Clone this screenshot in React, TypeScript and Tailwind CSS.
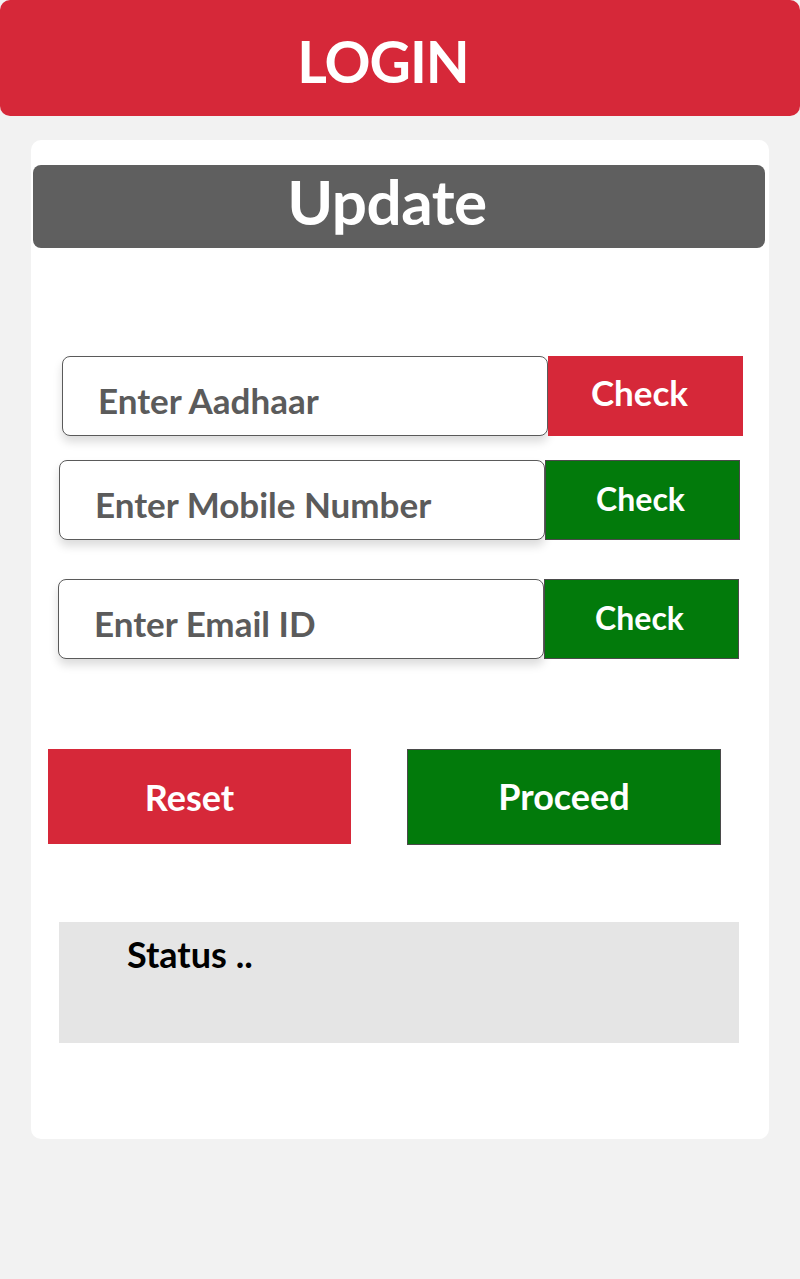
import React from "react";

const font = { fontFamily: "Lato, 'Open Sans', sans-serif" };

type RowProps = {
  placeholder: string;
  offset: string;
  top: string;
  danger?: boolean;
};

const CheckRow: React.FC<RowProps> = ({ placeholder, offset, top, danger }) => (
  <div className={`flex ${offset} ${top}`}>
    <div className="w-[486px] h-[80px] rounded-lg border border-[#5a5a5a] bg-white shadow-[0_6px_10px_rgba(0,0,0,0.14)] flex items-center pl-[35px] pt-[8px]">
      <span className="text-[35px] font-bold text-[#5b5b5b]">{placeholder}</span>
    </div>
    <button
      className={`w-[195px] h-[80px] flex justify-center font-bold text-white ${
        danger
          ? "bg-[#d62839] text-[35px] pt-[10px] pr-[12px]"
          : "bg-[#027a0b] border border-[#4a4a4a] text-[32px] pt-[14px] pr-[4px]"
      }`}
    >
      Check
    </button>
  </div>
);

export default function App() {
  return (
    <div className="min-h-[1279px] bg-[#f2f2f2] pb-[139px]" style={font}>
      {/* top bar */}
      <header className="h-[116px] rounded-[10px] bg-[#d62839] flex items-center justify-center pr-[34px]">
        <h1 className="text-[57px] font-bold text-white tracking-[-1px] pt-[8px]">LOGIN</h1>
      </header>

      <main className="mx-[31px] mt-[24px] rounded-[10px] bg-white pt-[25px] pb-[96px]">
        <div className="ml-[2px] mr-[4px] h-[83px] rounded-lg bg-[#5f5f5f] flex items-center justify-center pr-[24px] pb-[10px]">
          <h2 className="text-[62px] font-bold text-white tracking-[-0.5px]">Update</h2>
        </div>

        <CheckRow placeholder="Enter Aadhaar" offset="ml-[31px]" top="mt-[108px]" danger />
        <CheckRow placeholder="Enter Mobile Number" offset="ml-[28px]" top="mt-[24px]" />
        <CheckRow placeholder="Enter Email ID" offset="ml-[27px]" top="mt-[39px]" />

        <div className="flex mt-[90px] ml-[17px]">
          <button className="w-[303px] h-[95px] bg-[#d62839] text-white text-[36px] font-bold pr-[20px]">
            Reset
          </button>
          <button className="w-[314px] h-[96px] ml-[56px] bg-[#027a0b] border border-[#4a4a4a] text-white text-[36px] font-bold pb-[2px]">
            Proceed
          </button>
        </div>

        <div className="mt-[77px] ml-[28px] w-[680px] h-[121px] bg-[#e5e5e5] pl-[68px] pt-[5px]">
          <p className="text-[36px] font-bold text-black">Status ..</p>
        </div>
      </main>
    </div>
  );
}
